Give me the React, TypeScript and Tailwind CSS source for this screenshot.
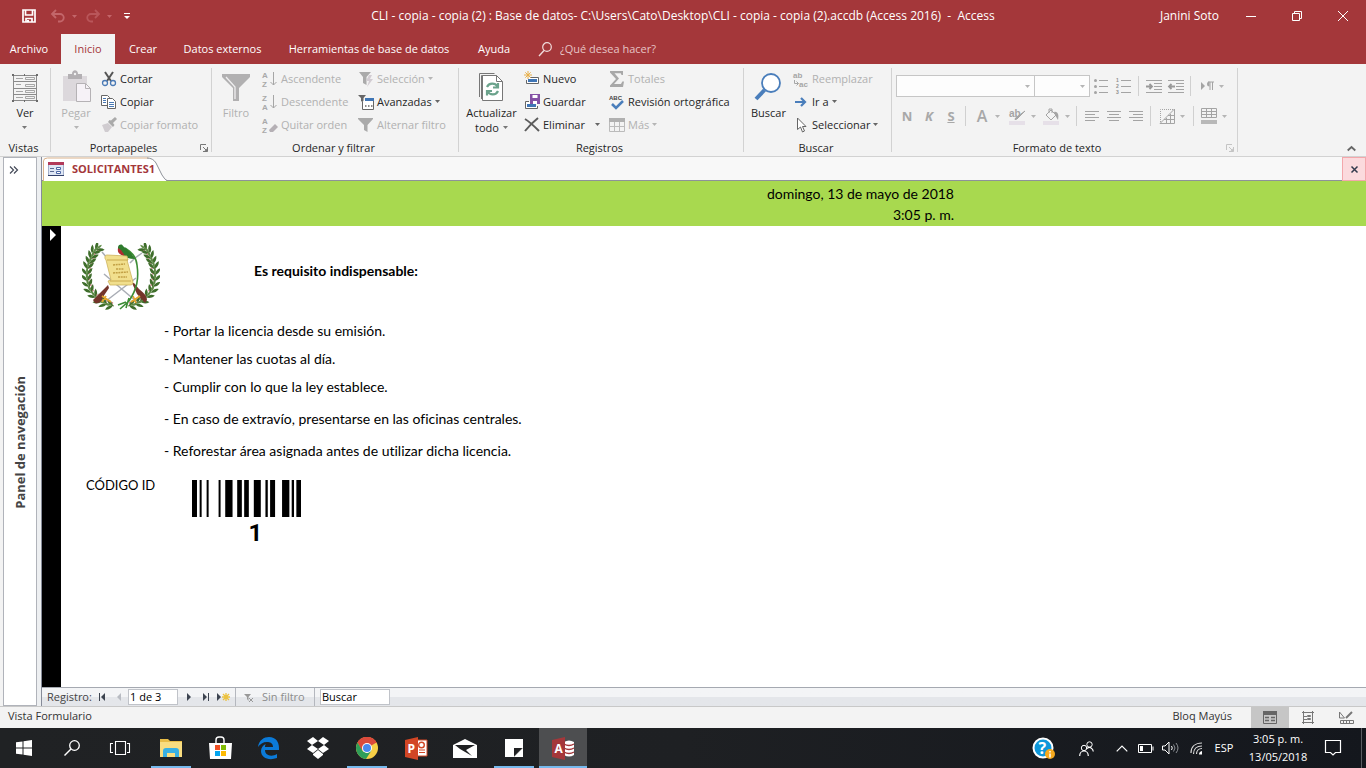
import type { ReactNode } from "react";

type IcoProps = { w?: number; h?: number; box?: string; children: ReactNode };

function Ico({ w = 16, h = 16, box, children }: IcoProps) {
  return (
    <svg width={w} height={h} viewBox={box ?? `0 0 ${w} ${h}`} fill="none" aria-hidden="true" className="shrink-0 overflow-visible">
      {children}
    </svg>
  );
}

function Arrow({ tone = "#777" }: { tone?: string }) {
  return (
    <Ico w={5} h={3}>
      <path d="M0 0h5L2.5 3z" fill={tone} />
    </Ico>
  );
}

const Sigma = () => (
  <Ico>
    <path d="M1 0h13v4h-1.500l-.7-1.800H5.500L10 7.500 5 13h7l1.300-2.500H15L14 16H1v-1.500L7 8 1 1.500z" fill="#a8a8a8" />
  </Ico>
);

const SortLetters = ({ a, b, eraser }: { a: string; b: string; eraser?: boolean }) => (
  <Ico w={16} h={18}>
    <text x="0" y="8" fontSize="8" fontFamily="Liberation Sans, sans-serif" fontWeight="700" fill="#a9a9a9">{a}</text>
    <text x="0" y="17" fontSize="8" fontFamily="Liberation Sans, sans-serif" fontWeight="700" fill="#a9a9a9">{b}</text>
    {eraser ? (
      <path d="M7 14l6-6 3 3-5 5H8z" fill="#b5b0b5" />
    ) : (
      <path d="M11.500 2v13M8.500 12l3 3 3-3" stroke="#a6a6a6" />
    )}
  </Ico>
);

const Funnel = () => <path d="M0 1h15v1L9.500 8v7L6 13V8L0 2z" fill="#aaa" />;

function SmallCmd({ icon, label, off, arrow, split }: { icon: ReactNode; label: string; off?: boolean; arrow?: boolean; split?: boolean }) {
  return (
    <button type="button" className={`flex h-[23px] items-center gap-[3px] whitespace-nowrap ${off ? "text-[#b1b1b1]" : "text-[#262626]"}`}>
      {icon}
      <span>{label}</span>
      {split && <span className="w-1" />}
      {(arrow || split) && <Arrow tone={off ? "#b5b5b5" : "#666"} />}
    </button>
  );
}

function BigCmd({ icon, children, off }: { icon: ReactNode; children: ReactNode; off?: boolean }) {
  return (
    <button type="button" className={`flex flex-col items-center gap-[3px] pt-[3px] leading-[15px] ${off ? "text-[#b1b1b1]" : "text-[#262626]"}`}>
      {icon}
      <span className="flex flex-col items-center">{children}</span>
    </button>
  );
}

function Launcher({ light }: { light?: boolean }) {
  const c = light ? "#c4c4c4" : "#777";
  return (
    <button type="button" aria-label="Más opciones" className="ml-1">
      <Ico w={8} h={8}>
        <path d="M.5 6V.5H6" stroke={c} />
        <path d="M3 3l3 3M7.500 3v4.500H3" stroke={c} />
        <path d="M4 7.500h3.500V4z" fill={c} />
      </Ico>
    </button>
  );
}

function Group({ label, width, launcher, light, children }: { label: string; width: string; launcher?: boolean; light?: boolean; children: ReactNode }) {
  return (
    <section aria-label={label} className={`flex shrink-0 ${width}`}>
      <div className="flex grow flex-col pt-[3px]">
        <div className="flex h-[73px]">{children}</div>
        <div className="flex h-4 items-center pr-[3px]">
          <span className="grow text-center text-[#262626]">{label}</span>
          {launcher && <Launcher light={light} />}
        </div>
      </div>
      <span className="my-1 w-px bg-[#d2d2d2]" />
    </section>
  );
}

const Sep = () => <span className="mx-[3px] h-5 w-px shrink-0 bg-[#d0d0d0]" />;

function Tool({ label, width, arrow, children }: { label: string; width: string; arrow?: boolean; children: ReactNode }) {
  return (
    <button type="button" aria-label={label} className={`flex h-[22px] shrink-0 items-center justify-center gap-[5px] text-[#a8a8a8] ${width}`}>
      {children}
      {arrow && <Arrow tone="#b5b5b5" />}
    </button>
  );
}

const lines = (d: string) => (
  <Ico w={14} h={12}>
    <path d={d} stroke="#a4a4a4" />
  </Ico>
);

function TitleBar() {
  return (
    <header className="flex h-8 items-center text-xs text-white">
      <div className="flex flex-1 items-center">
        <button type="button" aria-label="Guardar" className="ml-[22px]">
          <Ico w={14} h={14}>
            <path d="M1 1h12v12H1zM3.500 1v5h7V1M4 13V9.500h6V13" stroke="#fff" strokeWidth="1.700" />
            <path d="M5 11h2v2H5z" fill="#fff" />
          </Ico>
        </button>
        <button type="button" aria-label="Deshacer" className="ml-[14px] flex items-center gap-[6px]">
          <Ico w={16} h={14}>
            <path d="M2 5h8a3.500 3.500 0 010 7.500H8M6 1L2 5l4 4" stroke="#c3666a" strokeWidth="1.800" />
          </Ico>
          <Arrow tone="#c3666a" />
        </button>
        <button type="button" aria-label="Rehacer" className="ml-2 flex items-center gap-[6px]">
          <Ico w={16} h={14}>
            <path d="M14 5H6a3.500 3.500 0 000 7.500h2M10 1l4 4-4 4" stroke="#b9565a" strokeWidth="1.800" />
          </Ico>
          <Arrow tone="#c3666a" />
        </button>
        <button type="button" aria-label="Personalizar" className="ml-3">
          <Ico w={6} h={6}>
            <path d="M0 .5h6" stroke="#fff" />
            <path d="M0 3h6L3 6z" fill="#fff" />
          </Ico>
        </button>
      </div>
      <h1 className="whitespace-pre">CLI - copia - copia (2) : Base de datos- C:\Users\Cato\Desktop\CLI - copia - copia (2).accdb (Access 2016)  -  Access</h1>
      <div className="flex flex-1 items-center justify-end">
        <span className="mr-[9px]">Janini Soto</span>
        <button type="button" aria-label="Minimizar" className="flex h-8 w-[46px] items-center justify-center">
          <Ico w={10} h={10}><path d="M0 5.500h10" stroke="#fff" /></Ico>
        </button>
        <button type="button" aria-label="Restaurar" className="flex h-8 w-[46px] items-center justify-center">
          <Ico w={10} h={10}><path d="M.5 2.500h7v7h-7zM2.500 2V.5h7v7H8" stroke="#fff" /></Ico>
        </button>
        <button type="button" aria-label="Cerrar" className="flex h-8 w-[46px] items-center justify-center">
          <Ico w={10} h={10}><path d="M0 0l10 10M10 0L0 10" stroke="#fff" /></Ico>
        </button>
      </div>
    </header>
  );
}

const menu = [
  { t: "Archivo", w: "w-[61px] pr-[3px]" },
  { t: "Inicio", w: "w-[54px]" },
  { t: "Crear", w: "w-14" },
  { t: "Datos externos", w: "w-[103px]" },
  { t: "Herramientas de base de datos", w: "w-[190px]" },
  { t: "Ayuda", w: "w-[60px]" },
];

function Menu() {
  return (
    <nav className="flex h-8 items-end text-white">
      {menu.map((m) => (
        <button
          key={m.t}
          type="button"
          className={`h-[30px] shrink-0 whitespace-nowrap text-center ${m.w} ${m.t === "Inicio" ? "bg-[#f3f3f3] text-[#a4373a]" : ""}`}
        >
          {m.t}
        </button>
      ))}
      <label className="ml-[14px] flex h-[30px] items-center gap-2">
        <Ico w={14} h={15}>
          <circle cx="9" cy="5" r="4.300" stroke="#f0dcdc" strokeWidth="1.200" />
          <path d="M6 8.500L1 14" stroke="#f0dcdc" strokeWidth="1.400" />
        </Ico>
        <input aria-label="Buscar comando" placeholder="¿Qué desea hacer?" className="w-40 bg-transparent outline-none placeholder:text-[#e6c4c5]" />
      </label>
    </nav>
  );
}

function Ribbon() {
  return (
    <div className="flex h-[93px] border-b border-[#d2d2d2] bg-[#f3f3f3]">
      <Group label="Vistas" width="w-[51px]">
        <div className="flex grow justify-center">
          <BigCmd
            icon={
              <Ico w={26} h={32}>
                <path d="M1.500 5.500h23v25h-23zM1.500 11.500h23M1.500 18.500h23M1.500 24.500h23" stroke="#8a8a8a" />
                <path d="M4 8.500h7M4 14.500h5M4 21.500h7M4 27.500h7" stroke="#a5a5a5" />
                <path d="M13.500 7.500h9v2h-9zM13.500 14.500h9v2h-9zM13.500 20.500h9v2h-9zM13.500 26.500h9v2h-9z" stroke="#a5a5a5" />
                <path d="M0 4h2v2H0zM24 4h2v2h-2zM0 30h2v2H0zM24 30h2v2h-2zM12 4h1v2h-1zM12 30h1v2h-1z" fill="#6b6b6b" />
              </Ico>
            }
          >
            <span>Ver</span>
            <span className="flex h-[15px] items-center"><Arrow /></span>
          </BigCmd>
        </div>
      </Group>

      <Group label="Portapapeles" width="w-[161px]" launcher>
        <div className="flex w-[50px] shrink-0 justify-center">
          <BigCmd
            off
            icon={
              <Ico w={30} h={32}>
                <path d="M2 6h24v25H2z" fill="#dcd8dc" />
                <path d="M7 4h4c0-5 6-5 6 0h4v5H7z" fill="#b3b0b3" />
                <circle cx="14" cy="4" r="1.200" fill="#f3f3f3" />
                <path d="M15.500 13.500h9l5 5v13h-14z" fill="#f6f2f7" stroke="#b5b2b5" />
                <path d="M24.500 13.500v5h5" stroke="#b5b2b5" />
              </Ico>
            }
          >
            <span>Pegar</span>
            <span className="flex h-[15px] items-center"><Arrow tone="#b5b5b5" /></span>
          </BigCmd>
        </div>
        <div className="flex flex-col">
          <SmallCmd
            label="Cortar"
            icon={
              <Ico>
                <path d="M4 1l6 9M12 1l-6 9" stroke="#555" strokeWidth="2" />
                <circle cx="4" cy="12" r="2.500" stroke="#4a7ab5" strokeWidth="1.300" />
                <circle cx="12" cy="12" r="2.500" stroke="#4a7ab5" strokeWidth="1.300" />
              </Ico>
            }
          />
          <SmallCmd
            label="Copiar"
            icon={
              <Ico>
                <path d="M.5 1.500h6l2 2v8h-8z" fill="#fff" stroke="#666" />
                <path d="M2 4.500h3M2 6.500h3M2 8.500h3" stroke="#4a7ab5" />
                <path d="M6.500 4.500h5l3 3v7h-8z" fill="#fff" stroke="#666" />
                <path d="M8 8.500h5M8 10.500h5M8 12.500h5" stroke="#4a7ab5" />
              </Ico>
            }
          />
          <SmallCmd
            off
            label="Copiar formato"
            icon={
              <Ico>
                <path d="M1 8l6-2 4 4-4 5H4z" fill="#d0ccd0" />
                <path d="M7 5l5 5 1.500-2L12 6l4-4-2-2-4 3.500L8.500 3z" fill="#aaa" />
              </Ico>
            }
          />
        </div>
      </Group>

      <Group label="Ordenar y filtrar" width="w-[247px]">
        <div className="flex w-12 shrink-0 justify-center">
          <BigCmd
            off
            icon={
              <Ico w={28} h={32}>
                <path d="M0 4h28v3L17 18v13h-6V18L0 7z" fill="#b1b0b1" />
                <path d="M4 7l9 10v12" stroke="#f0eff0" strokeWidth="1.300" />
              </Ico>
            }
          >
            <span>Filtro</span>
          </BigCmd>
        </div>
        <div className="flex w-[97px] shrink-0 flex-col pl-[2px]">
          <SmallCmd off label="Ascendente" icon={<SortLetters a="A" b="Z" />} />
          <SmallCmd off label="Descendente" icon={<SortLetters a="Z" b="A" />} />
          <SmallCmd off label="Quitar orden" icon={<SortLetters a="A" b="Z" eraser />} />
        </div>
        <div className="flex flex-col pl-px">
          <SmallCmd
            off
            arrow
            label="Selección"
            icon={
              <Ico>
                <path d="M1 1h12L8.500 6v8L5 12V6z" fill="#aaa" />
                <path d="M11 4L8 10h3l-2 6 6-8h-3l2-4z" fill="#d2ccd2" />
              </Ico>
            }
          />
          <SmallCmd
            arrow
            label="Avanzadas"
            icon={
              <Ico>
                <path d="M0 1h8L5.500 4v5L3 7V4z" fill="#666" />
                <path d="M4.500 8v7.500h11v-11H8" fill="#fff" stroke="#666" />
                <path d="M7 4h9v3H7z" fill="#3f75b5" />
                <path d="M7 12h1.500M10 12h1.500M13 12h1.500" stroke="#666" strokeWidth="1.500" />
              </Ico>
            }
          />
          <SmallCmd off label="Alternar filtro" icon={<Ico><Funnel /></Ico>} />
        </div>
      </Group>

      <Group label="Registros" width="w-[285px]">
        <div className="flex w-[65px] shrink-0 justify-center">
          <BigCmd
            icon={
              <Ico w={26} h={32}>
                <path d="M1.500 27V3.500h15M3.500 29V5.500h15" stroke="#777" />
                <path d="M4.500 5.500h14l6 6v19h-20z" fill="#fff" stroke="#777" />
                <path d="M18.500 5.500v6h6" stroke="#777" />
                <path d="M9 17c2-4.500 8-4.500 10.500-.5M20 13v4.500h-5M20 21c-2 4.500-8 4.500-10.500.5M9 25.500V21h5" stroke="#6ba38c" strokeWidth="2.200" />
              </Ico>
            }
          >
            <span>Actualizar</span>
            <span className="flex items-center gap-1">todo <Arrow /></span>
          </BigCmd>
        </div>
        <div className="flex w-[85px] shrink-0 flex-col">
          <SmallCmd
            label="Nuevo"
            icon={
              <Ico>
                <path d="M6 6.500h8.500v6H2.500V9" fill="#fff" stroke="#666" />
                <path d="M4 8h9v3H4z" fill="#3f75b5" />
                <path d="M4 0v8M0 4h8M1.300 1.300l5.400 5.400M6.700 1.300L1.300 6.700" stroke="#e8b04a" />
              </Ico>
            }
          />
          <SmallCmd
            label="Guardar"
            icon={
              <Ico>
                <path d="M5 7.500H1.500v7h12V12" fill="#fff" stroke="#666" />
                <path d="M3 10h9v3H3z" fill="#3f75b5" />
                <path d="M6 0h10v10H6z" fill="#8451a5" />
                <path d="M8.500 1h5v3h-5zM9 7h4v3H9z" fill="#fff" />
              </Ico>
            }
          />
          <SmallCmd split label="Eliminar" icon={<Ico><path d="M1 2c5 3 9 7 14 12M14 1C9 5 5 9 1 14" stroke="#5c5c5c" strokeWidth="2" /></Ico>} />
        </div>
        <div className="flex flex-col">
          <SmallCmd off label="Totales" icon={<Sigma />} />
          <SmallCmd
            label="Revisión ortográfica"
            icon={
              <Ico>
                <text x="0" y="6" fontSize="6" fontWeight="700" fontFamily="Liberation Sans, sans-serif" fill="#444">ABC</text>
                <path d="M3 10l4 4 7-7" stroke="#4a7ebb" strokeWidth="2.500" />
              </Ico>
            }
          />
          <SmallCmd
            off
            arrow
            label="Más"
            icon={
              <Ico>
                <path d="M.5 5v9.500h15V5M.5 9.500h15M5.500 5v9M10.500 5v9" stroke="#bbb" />
                <path d="M0 1h16v4H0z" fill="#b0b0b0" />
              </Ico>
            }
          />
        </div>
      </Group>

      <Group label="Buscar" width="w-[148px]">
        <div className="flex w-[49px] shrink-0 justify-center">
          <BigCmd
            icon={
              <Ico w={28} h={32}>
                <circle cx="17" cy="13" r="9" fill="#fff" stroke="#4a7ebb" strokeWidth="1.800" />
                <path d="M10.500 20L2 29" stroke="#4a7ebb" strokeWidth="4" />
              </Ico>
            }
          >
            <span>Buscar</span>
          </BigCmd>
        </div>
        <div className="flex flex-col">
          <SmallCmd
            off
            label="Reemplazar"
            icon={
              <Ico w={16} h={18}>
                <text x="0" y="8" fontSize="8" fontWeight="700" fontFamily="Liberation Sans, sans-serif" fill="#a6a6a6">ab</text>
                <text x="6" y="17" fontSize="8" fontWeight="700" fontFamily="Liberation Sans, sans-serif" fill="#a6a6a6">ac</text>
                <path d="M1.500 10v3.500h4M3.500 11.500l2 2-2 2" stroke="#a6a6a6" />
              </Ico>
            }
          />
          <SmallCmd arrow label="Ir a" icon={<Ico><path d="M2 8h9M8 4l4 4-4 4" stroke="#4a7ebb" strokeWidth="2.200" /></Ico>} />
          <SmallCmd arrow label="Seleccionar" icon={<Ico><path d="M4.500 1v11.500l3-2.500 2 5 2-1-2-4.500h3.500z" fill="#fff" stroke="#666" /></Ico>} />
        </div>
      </Group>

      <Group label="Formato de texto" width="w-[346px]" launcher light>
        <div className="flex flex-col gap-2 pt-2 pl-1">
          <div className="flex items-center">
            {[
              { n: "Fuente", w: "w-[139px]" },
              { n: "Tamaño de fuente", w: "-ml-px w-14" },
            ].map((s) => (
              <span key={s.n} className={`relative flex h-[22px] items-center ${s.w}`}>
                <select aria-label={s.n} className="h-full w-full appearance-none border border-[#c6c6c6] bg-[#fdfdfd]">
                  <option></option>
                </select>
                <span className="pointer-events-none absolute right-[5px]"><Arrow tone="#b5b5b5" /></span>
              </span>
            ))}
            <Tool label="Viñetas" width="w-[22px]">
              <Ico w={14} h={16}>
                <path d="M5 2.500h9M5 8.500h9M5 14.500h9" stroke="#a4a4a4" />
                <circle cx="1.500" cy="2.500" r="1.500" fill="#a4a4a4" /><circle cx="1.500" cy="8.500" r="1.500" fill="#a4a4a4" /><circle cx="1.500" cy="14.500" r="1.500" fill="#a4a4a4" />
              </Ico>
            </Tool>
            <Tool label="Numeración" width="w-[23px]">
              <Ico w={15} h={16}>
                <path d="M5 2.500h10M5 8.500h10M5 14.500h10" stroke="#a4a4a4" />
                <text x="0" y="4" fontSize="5" fontWeight="700" fontFamily="Liberation Sans, sans-serif" fill="#8f8f8f">1</text>
                <text x="0" y="10" fontSize="5" fontWeight="700" fontFamily="Liberation Sans, sans-serif" fill="#8f8f8f">2</text>
                <text x="0" y="16" fontSize="5" fontWeight="700" fontFamily="Liberation Sans, sans-serif" fill="#8f8f8f">3</text>
              </Ico>
            </Tool>
            <Sep />
            <Tool label="Aumentar sangría" width="w-[23px]">
              <Ico w={16} h={13}>
                <path d="M0 .5h16M8 3.500h8M8 6.500h8M8 9.500h8M0 12.500h16" stroke="#a4a4a4" />
                <path d="M0 6.500h6M3.500 4l2.500 2.500L3.500 9" stroke="#999" strokeWidth="1.800" />
              </Ico>
            </Tool>
            <Tool label="Disminuir sangría" width="w-[22px]">
              <Ico w={16} h={13}>
                <path d="M0 .5h16M8 3.500h8M8 6.500h8M8 9.500h8M0 12.500h16" stroke="#a4a4a4" />
                <path d="M1 6.500h6M3.500 4L1 6.500 3.500 9" stroke="#999" strokeWidth="1.800" />
              </Ico>
            </Tool>
            <Sep />
            <Tool label="Dirección del texto" width="w-9" arrow>
              <Ico w={13} h={10}>
                <path d="M0 1l4 4-4 4z" fill="#a4a4a4" />
                <path d="M8.500 .5a2.500 2.500 0 000 5z" fill="#a4a4a4" />
                <path d="M7 1h6M9 1v8M11.500 1v8" stroke="#a4a4a4" />
              </Ico>
            </Tool>
          </div>
          <div className="flex items-center">
            <Tool label="Negrita" width="w-[22px]"><span className="text-[13px] font-bold">N</span></Tool>
            <Tool label="Cursiva" width="w-[22px]"><span className="text-[13px] font-bold italic">K</span></Tool>
            <Tool label="Subrayado" width="w-[22px]"><span className="text-[13px] font-bold underline">S</span></Tool>
            <Sep />
            <Tool label="Color de fuente" width="w-9" arrow><span className="w-4 text-center text-base font-semibold">A</span></Tool>
            <Tool label="Resaltado" width="w-[34px]" arrow>
              <Ico w={17} h={17}>
                <text x="0" y="9" fontSize="10" fontWeight="700" fontFamily="Liberation Sans, sans-serif" fill="#a4a4a4">ab</text>
                <path d="M16 3L8 11l-2 .5.500-1.500z" fill="#a4a4a4" stroke="#a4a4a4" />
                <path d="M0 13h16v4H0z" fill="#e6e0e8" />
              </Ico>
            </Tool>
            <Tool label="Relleno" width="w-[34px]" arrow>
              <Ico w={17} h={17}>
                <path d="M3 7l5-5 5 5-5 5zM6 5V1h3v4" stroke="#a4a4a4" />
                <path d="M11 4c4-1 5 3 4 8l-3-5z" fill="#a4a4a4" />
                <path d="M0 13h16v4H0z" fill="#e6e0e8" />
              </Ico>
            </Tool>
            <Sep />
            <Tool label="Alinear a la izquierda" width="w-[23px]">{lines("M0 1.500h14M0 4.500h10M0 7.500h14M0 10.500h10")}</Tool>
            <Tool label="Centrar" width="w-[22px]">{lines("M0 1.500h14M2 4.500h10M0 7.500h14M2 10.500h10")}</Tool>
            <Tool label="Alinear a la derecha" width="w-[22px]">{lines("M0 1.500h14M4 4.500h10M0 7.500h14M4 10.500h10")}</Tool>
            <Sep />
            <Tool label="Líneas de división" width="w-9" arrow>
              <Ico w={15} h={15}>
                <path d="M.5 15V.5H15" stroke="#a4a4a4" strokeDasharray="1 1" />
                <path d="M0 14.500L14.500 0v14.500zM4 10.500h10M8 6.500h6M6.500 9v5M10.500 5v9" stroke="#a4a4a4" />
              </Ico>
            </Tool>
            <Sep />
            <Tool label="Color de fila alternativo" width="w-[34px]" arrow>
              <Ico w={16} h={16}>
                <path d="M.5 .5h15v9H.5zM.5 3.500h15M.5 6.500h15M5.500 0v9M10.500 0v9" stroke="#a4a4a4" />
                <path d="M0 12h16v4H0z" fill="#b8b8b8" />
              </Ico>
            </Tool>
          </div>
        </div>
      </Group>
      <button type="button" aria-label="Contraer la cinta" className="mr-[10px] mb-1 ml-auto self-end">
        <Ico w={9} h={7}><path d="M.7 5.500L4.500 2l3.800 3.500" stroke="#666" strokeWidth="1.800" /></Ico>
      </button>
    </div>
  );
}

const leaves: [number, number, number][] = [
  [16, 5, 50], [12, 8, 40], [10, 13, 25], [8, 18, 15], [6, 23, 8], [5, 29, 0], [5, 35, -8], [6, 41, -18], [8, 47, -28], [12, 52, -40], [17, 57, -55], [22, 60, -70], [28, 62, -80],
];

function Laurel() {
  return (
    <g>
      <path d="M18 3C4 13 1 36 11 50c5 7 11 10 21 13" stroke="#6b7f45" />
      {leaves.map(([x, y, r]) => (
        <g key={`${x}-${y}`} transform={`translate(${x} ${y}) rotate(${r})`}>
          <path d="M0 3C-3 2-5 0-5.500-4-2-3-.5-1 0 3zM0 3c3-1 5-3 5.500-7C2-3 .5-1 0 3z" fill="#3f6e2c" />
          <path d="M0 2c-1.500-3-1-5 0-7 1.500 2 1.500 4 0 7z" fill="#5d8a45" />
          <circle cx="2.500" cy="2" r=".8" fill="#d58a90" />
        </g>
      ))}
    </g>
  );
}

function Emblem() {
  return (
    <svg width="78" height="68" viewBox="0 0 78 68" fill="none" role="img" aria-label="Escudo de Guatemala" className="shrink-0">
      <Laurel />
      <g transform="matrix(-1 0 0 1 78 0)"><Laurel /></g>
      <path d="M20 9l6 7M60 10l-7 5-5 5M22 31l33 28M54 35L24 58" stroke="#a9adb5" strokeWidth="1.500" />
      <path d="M26 42l-9 9-6 6 2 3c4 1 7-2 8-6l6-9zM50 40l5 11 8 9 2-3c0-4-4-8-8-11l-5-6z" fill="#74342a" />
      <path d="M20 53l9 6M24 53l-4 6M49 59l9-6M51 53l3 7" stroke="#e3a52c" strokeWidth="1.800" />
      <path d="M43 5c6 4 11 8 12 17 2 14 0 24-8 36L38 66M47 55l-3 10M44 59l-8 3" stroke="#3c8c35" strokeWidth="1.600" />
      <path d="M36 4c1-3 4-3 5-1l8 7 4 6c-7 0-14-3-17-8z" fill="#2e7b2d" />
      <path d="M36 5c-1 5 2 7 7 8l-4-6z" fill="#b22a32" />
      <path d="M25 12l20 1 1 4h-1l6 22c0 3-2 3-3 3H28l-2-4 3-1-5-20c-2-2-1-5 1-5z" fill="#f1df8d" stroke="#cdb25c" strokeWidth=".8" />
      <path d="M25 17h21M28 38h21" stroke="#caa94d" />
      <path d="M31 22l12-1M34 26h8M31 30l15-1M36 34h9" stroke="#c2a045" strokeWidth="1.500" strokeDasharray="2 .7" />
    </svg>
  );
}

const bars = [[0, 15], [23, 6], [44, 6], [80, 6], [100, 22], [136, 14], [157, 14], [186, 21], [221, 7], [235, 15], [271, 22], [300, 7], [314, 14]];

function DocumentTab() {
  return (
    <div className="flex h-6 items-start border-b border-[#8e9299] bg-[#f8f8f8]">
      <button type="button" className="relative -mb-px ml-px flex h-6 w-[124px] items-center pl-[5px]">
        <svg width="124" height="24" viewBox="0 0 124 24" fill="none" aria-hidden="true" className="absolute top-0 left-0">
          <path d="M0 24V4q0-3 4-3h101q5 0 8 5l6 12q3 5 5 6z" fill="#fff" />
          <path d="M.5 24V4q0-3 4-3h101" stroke="#d9b28c" />
          <path d="M104 1q6 0 9 5l6 12q3 5 5 5.500" stroke="#8e9299" />
        </svg>
        <span className="relative flex items-center gap-2 font-bold text-[#a4373a]">
          <Ico w={16} h={14}>
            <path d="M.5 .5h15v13H.5z" fill="#dfe7f5" stroke="#a3afcb" />
            <path d="M0 0h16v3H0z" fill="#b23a5a" />
            <path d="M2 6.500h4M2 9.500h4" stroke="#5a6a93" />
            <path d="M8.500 5.500h4v2h-4zM8.500 9.500h4v2h-4z" fill="#fff" stroke="#4c67a5" />
            <path d="M0 13.500h16" stroke="#33416b" />
          </Ico>
          SOLICITANTES1
        </span>
      </button>
      <button type="button" aria-label="Cerrar pestaña" className="ml-auto flex h-6 w-6 items-center justify-center border border-[#f3a7ab] bg-[#fbdadd]">
        <Ico w={7} h={7}><path d="M.5 .5l6 6M6.500 .5l-6 6" stroke="#333b4d" strokeWidth="1.500" /></Ico>
      </button>
    </div>
  );
}

function Form() {
  return (
    <main className="flex grow flex-col font-[Lato,sans-serif] text-[14px] text-black [font-variant-ligatures:none]">
      <div className="h-[45px] bg-[#a8d94f] pt-[2px] leading-[21px]">
        <div className="w-[912px] text-right">
          <p>domingo, 13 de mayo de 2018</p>
          <p>3:05 p. m.</p>
        </div>
      </div>
      <div className="flex grow bg-white">
        <div className="w-[19px] shrink-0 bg-black pt-[3px] pl-2">
          <Ico w={6} h={12}><path d="M0 0l6 6-6 6z" fill="#fff" /></Ico>
        </div>
        <div className="pt-[17px] pl-[21px] leading-5">
          <div className="flex">
            <Emblem />
            <h2 className="mt-[18px] ml-[94px] font-bold">Es requisito indispensable:</h2>
          </div>
          <ul className="mt-[10px] pl-[82px]">
            <li>- Portar la licencia desde su emisión.</li>
            <li className="mt-2">- Mantener las cuotas al día.</li>
            <li className="mt-2">- Cumplir con lo que la ley establece.</li>
            <li className="mt-3">- En caso de extravío, presentarse en las oficinas centrales.</li>
            <li className="mt-3">- Reforestar área asignada antes de utilizar dicha licencia.</li>
          </ul>
          <div className="mt-[14px] flex pl-1">
            <span className="w-[106px] text-[13px]">CÓDIGO ID</span>
            <figure className="flex flex-col pt-[5px]">
              <svg width="109" height="37" viewBox="0 0 328 112" preserveAspectRatio="none" role="img" aria-label="Código de barras">
                {bars.map(([x, w]) => <rect key={x} x={x} width={w} height="112" fill="#000" />)}
              </svg>
              <figcaption className="mt-1 pl-[18px] text-center font-[Roboto,sans-serif] text-2xl leading-6 font-bold">1</figcaption>
            </figure>
          </div>
        </div>
      </div>
    </main>
  );
}

function RecordNav() {
  const k = "#3d4450";
  return (
    <div className="flex h-[19px] items-center border-t border-[#a5a9b1] bg-linear-to-b from-[#f3f4f6] from-50% to-[#e4e6ea] to-50% pl-[5px] text-[#444]">
      <label htmlFor="registro" className="w-[52px]">Registro:</label>
      <button type="button" aria-label="Primer registro" className="flex w-[17px]"><Ico w={7} h={8}><path d="M.5 0v8" stroke={k} /><path d="M6 0v8L2 4z" fill={k} /></Ico></button>
      <button type="button" aria-label="Registro anterior" className="flex w-3"><Ico w={6} h={8}><path d="M5 0v8L1 4z" fill="#b8bbc2" /></Ico></button>
      <input id="registro" defaultValue="1 de 3" className="h-4 w-[50px] border border-[#c0c3c9] bg-white px-px text-black" />
      <div className="ml-[9px] flex">
        <button type="button" aria-label="Registro siguiente" className="w-4"><Ico w={5} h={8}><path d="M0 0v8l4-4z" fill={k} /></Ico></button>
        <button type="button" aria-label="Último registro" className="w-[14px]"><Ico w={7} h={8}><path d="M0 0v8l4-4z" fill={k} /><path d="M5.500 0v8" stroke={k} /></Ico></button>
        <button type="button" aria-label="Nuevo registro" className="w-[18px]"><Ico w={13} h={8}><path d="M0 0v8l4-4z" fill={k} /><path d="M9 0v8M5 4h8M6 1l6 6M12 1L6 7" stroke="#ecc23f" strokeWidth="1.300" /></Ico></button>
      </div>
      <span className="h-full w-px bg-[#b4b7be]" />
      <button type="button" className="ml-2 flex w-[70px] items-center gap-[9px] whitespace-nowrap text-[#8c8c8c]">
        <Ico w={9} h={9}><path d="M0 1h7L4.500 4v4L3 6V4z" fill="#999" /><path d="M5 5l4 4M9 5L5 9" stroke="#999" /></Ico>
        Sin filtro
      </button>
      <span className="h-full w-px bg-[#b4b7be]" />
      <input aria-label="Buscar" defaultValue="Buscar" className="ml-[5px] h-4 w-[70px] border border-[#c0c3c9] bg-white px-px text-black" />
    </div>
  );
}

function StatusBar() {
  return (
    <footer className="flex h-[22px] border-t border-[#c8c8c8] bg-[#f3f3f3] pl-2 text-[#333]">
      <span className="pt-px">Vista Formulario</span>
      <span className="mr-[19px] ml-auto pt-px">Bloq Mayús</span>
      <button type="button" aria-label="Vista Formulario" className="flex h-full w-[38px] items-center justify-center bg-[#c6c6c6]">
        <Ico w={14} h={13}><path d="M.5 .5h13v12H.5z" stroke="#666" /><path d="M0 0h14v4H0z" fill="#666" /><path d="M2 6.500h4M2 9.500h4M8 6.500h4M8 9.500h4" stroke="#666" strokeWidth="1.300" /></Ico>
      </button>
      <button type="button" aria-label="Vista Presentación" className="flex h-full w-[38px] items-center justify-center">
        <Ico w={12} h={13}><path d="M0 1.500h12M0 11.500h12M1.500 0v13M10.500 0v13M2 5.500h3M2 8.500h3M5.500 4.500h3v1h-3zM5.500 7.500h3v1h-3z" stroke="#777" /></Ico>
      </button>
      <button type="button" aria-label="Vista Diseño" className="mr-px flex h-full w-[38px] items-center justify-center">
        <Ico w={15} h={13}><path d="M.5 7V1l5 6zM1.500 9.500h13v3h-13zM4.500 10v2M7.500 10v2M10.500 10v2" stroke="#777" /><path d="M7 7l6-6" stroke="#777" strokeWidth="2" /></Ico>
      </button>
    </footer>
  );
}

const OfficeTile = ({ letter, color, children }: { letter: string; color: string; children: ReactNode }) => (
  <Ico w={23} h={23}>
    {children}
    <path d="M0 3l13-3v23L0 20z" fill={color} />
    <text x="2.500" y="16" fontSize="12" fontWeight="700" fontFamily="Open Sans, sans-serif" fill="#fff">{letter}</text>
  </Ico>
);

const apps: { n: string; open?: boolean; active?: boolean; icon: ReactNode }[] = [
  {
    n: "Explorador de archivos", open: true,
    icon: <Ico w={22} h={20}><path d="M0 1h8l2 2h12v16H0z" fill="#e9bd47" /><path d="M0 4h22v15H0z" fill="#f9dd80" /><path d="M3 19v-6q0-3 3-3h10q3 0 3 3v6h-4v-4H7v4z" fill="#38b0e3" /></Ico>,
  },
  {
    n: "Microsoft Store",
    icon: <Ico w={24} h={24}><path d="M8 7V4q0-3 3-3h2q3 0 3 3v3" stroke="#fff" strokeWidth="1.400" /><path d="M1 7h23l-1 16H2z" fill="#fff" /><path d="M7 9h5v5H7z" fill="#f04f23" /><path d="M13 9h5v5h-5z" fill="#80bb03" /><path d="M7 15h5v5H7z" fill="#03a5f0" /><path d="M13 15h5v5h-5z" fill="#fdb901" /></Ico>,
  },
  {
    n: "Edge",
    icon: <Ico w={22} h={22}><path d="M0 10C1 3 6 0 11 0c7 0 10 5 10 11v2H7c0 6 7 7 12 4v4C11 24 3 21 3 14c0-3 2-6 5-7-1 1-1 2-1 3h8c0-4-3-5-6-5-4 0-7 2-9 5z" fill="#0b7ad8" /></Ico>,
  },
  {
    n: "Dropbox",
    icon: <Ico w={24} h={22}><path d="M7 0l5 4-6 4-5-4zM17 0l6 4-5 4-6-4zM1 12l5-4 6 4-5 4zM18 8l5 4-6 4-5-4zM7 17l5-4 5 4v1l-5 4-5-4z" fill="#fff" /></Ico>,
  },
  {
    n: "Chrome", open: true,
    icon: <Ico w={22} h={22}><circle cx="11" cy="11" r="11" fill="#f7cf46" /><path d="M11 11L1.500 5.500a11 11 0 0119 0z" fill="#db4a3c" /><path d="M11 6h9.800a11 11 0 00-19.300-.5L6 14z" fill="#db4a3c" /><path d="M1.500 5.500A11 11 0 0010 22l5.500-8.500L11 16 6.500 14z" fill="#2f9e58" /><circle cx="11" cy="11" r="5" fill="#fff" /><circle cx="11" cy="11" r="4" fill="#4a88ee" /></Ico>,
  },
  {
    n: "PowerPoint",
    icon: <OfficeTile letter="P" color="#d24625"><path d="M12 3h10v16H12z" fill="#fff" stroke="#d24625" /><path d="M14 13h6M14 15.500h6" stroke="#d24625" /><circle cx="16.500" cy="8" r="2.800" stroke="#d24625" strokeWidth="1.400" /></OfficeTile>,
  },
  {
    n: "Correo",
    icon: <Ico w={24} h={19}><path d="M0 6l12-6 12 6v13H0z" fill="#fff" /><path d="M2 6h20l-9 5 6 6-12-7z" fill="#202123" /></Ico>,
  },
  { n: "Notas rápidas", open: true, icon: <Ico w={18} h={18}><path d="M0 0h18v9l-9 9H0z" fill="#fff" /><path d="M9 17.500V9h8.500z" fill="#202123" /><path d="M18 9v9H9z" fill="#fff" /></Ico> },
  {
    n: "Access", open: true, active: true,
    icon: <OfficeTile letter="A" color="#a4373a"><path d="M12 5q5-3 10 0v13q-5 3-10 0z" fill="#fff" /><path d="M12 7q5 3 10 0M12 11q5 3 10 0M12 15q5 3 10 0" stroke="#a4373a" strokeWidth="1.300" /></OfficeTile>,
  },
];

function Taskbar() {
  return (
    <div className="flex h-10 shrink-0 items-center bg-linear-to-r from-[#202224] via-[#1e2023] to-[#14171d] text-white">
      <button type="button" aria-label="Inicio" className="flex h-10 w-12 items-center justify-center">
        <Ico w={16} h={16}><path d="M0 2.300L6.500 1.400v6.100H0zM7.500 1.200L16 0v7.500H7.500zM0 8.500h6.500v6.100L0 13.700zM7.500 8.500H16V16l-8.500-1.200z" fill="#fff" /></Ico>
      </button>
      <button type="button" aria-label="Buscar en Windows" className="flex h-10 w-12 items-center justify-center">
        <Ico w={16} h={16}><circle cx="10.500" cy="5.500" r="4.800" stroke="#fff" strokeWidth="1.300" /><path d="M7 9L.5 15.500" stroke="#fff" strokeWidth="1.400" /></Ico>
      </button>
      <button type="button" aria-label="Vista de tareas" className="mr-[3px] flex h-10 w-12 items-center justify-center">
        <Ico w={20} h={14}><path d="M5.500 .5h10v13h-10zM3 2.500H.5v9H3M17 2.500h2.500v9H17" stroke="#fff" strokeWidth="1.100" /></Ico>
      </button>
      <div className="flex gap-px">
        {apps.map((a) => (
          <button key={a.n} type="button" aria-label={a.n} className={`flex h-10 w-12 flex-col items-center ${a.active ? "bg-[#4d4e50]" : ""}`}>
            <span className="flex grow items-center pt-[2px]">{a.icon}</span>
            <span className={`h-[2px] ${a.active ? "w-12" : "w-10"} ${a.open ? "bg-[#76b9ed]" : ""}`} />
          </button>
        ))}
      </div>
      <div className="ml-auto flex items-center">
        <button type="button" aria-label="Ayuda" className="flex w-11 justify-center">
          <Ico w={24} h={24}>
            <circle cx="12" cy="12" r="9.500" fill="#0e97da" stroke="#fff" strokeWidth="2" />
            <text x="7.500" y="18" fontSize="16" fontWeight="700" fontFamily="Open Sans, sans-serif" fill="#fff">?</text>
            <circle cx="19" cy="18" r="5" fill="#f6a91e" /><path d="M19 15v1.500M19 17.500v4" stroke="#fff" strokeWidth="1.500" />
          </Ico>
        </button>
        <button type="button" aria-label="Contactos" className="flex w-[42px] justify-center">
          <Ico w={15} h={15}><circle cx="5" cy="7" r="2.700" stroke="#fff" /><circle cx="10.500" cy="3.500" r="2.700" stroke="#fff" /><path d="M.7 15c0-3 2-5 4.300-5s4.300 2 4.300 5M8 7.500c3-2.500 6 0 6.300 3" stroke="#fff" strokeWidth="1.200" /></Ico>
        </button>
        <button type="button" aria-label="Iconos ocultos" className="ml-[3px] flex w-6 justify-center"><Ico w={12} h={7}><path d="M.7 6.300L6 1l5.300 5.300" stroke="#fff" strokeWidth="1.200" /></Ico></button>
        <button type="button" aria-label="Batería" className="flex w-6 justify-center"><Ico w={16} h={9}><path d="M.5 .5h13v8H.5zM15 2.500v4" stroke="#fff" /><path d="M2 2h3v5H2z" fill="#fff" /></Ico></button>
        <button type="button" aria-label="Volumen" className="flex w-6 justify-center">
          <Ico w={17} h={14}><path d="M.5 5H3l4-4v12L3 9H.5z" stroke="#fff" /><path d="M9.500 5q1.500 2 0 4" stroke="#fff" /><path d="M11.500 3.500q3 3.500 0 7M14 2q4 5 0 10" stroke="#8d9095" /></Ico>
        </button>
        <button type="button" aria-label="Red" className="flex w-7 justify-center">
          <Ico w={13} h={13}><path d="M1 11C1 5 5 1 12 1M3.500 12c0-5 3-8 8.500-8M6.500 12c0-3 2-5.500 5.500-5.500" stroke="#d8d8d8" strokeWidth="1.200" /><path d="M12 9v3.500H9q0-3 3-3.500z" fill="#fff" /></Ico>
        </button>
        <button type="button" className="w-7 text-center">ESP</button>
        <div className="w-20 text-center leading-[18px]">
          <p>3:05 p. m.</p>
          <p>13/05/2018</p>
        </div>
        <button type="button" aria-label="Notificaciones" className="flex w-[30px] justify-center"><Ico w={16} h={16}><path d="M.5 .5h15v12h-5L8 15l-2.500-2.500h-5z" stroke="#fff" strokeWidth="1.200" /></Ico></button>
        <span className="mr-1 ml-[13px] h-10 w-px bg-[#5a5d62]" />
      </div>
    </div>
  );
}

export default function App() {
  return (
    <div className="flex min-h-screen flex-col bg-[#f3f3f3] font-['Open_Sans',sans-serif] text-[11px] leading-4">
      <div className="bg-[#a4373a]">
        <TitleBar />
        <Menu />
      </div>
      <Ribbon />
      <div className="flex grow pl-[3px]">
        <aside className="flex w-[34px] shrink-0 flex-col items-center border border-[#b0b3ba] bg-white">
          <button type="button" aria-label="Abrir panel de navegación" className="mt-2 mr-[13px]">
            <Ico w={9} h={8}><path d="M1 .5L4.500 4 1 7.500M5 .5L8.500 4 5 7.500" stroke="#444a58" strokeWidth="1.200" /></Ico>
          </button>
          <div className="flex grow items-center pt-[6px]">
            <h2 className="rotate-180 text-[13px] font-bold text-[#444] [writing-mode:vertical-rl]">Panel de navegación</h2>
          </div>
        </aside>
        <div className="w-1 shrink-0 bg-[#edeff1]" />
        <div className="flex grow flex-col border-l border-[#868b99]">
          <DocumentTab />
          <Form />
          <RecordNav />
        </div>
      </div>
      <StatusBar />
      <Taskbar />
    </div>
  );
}
